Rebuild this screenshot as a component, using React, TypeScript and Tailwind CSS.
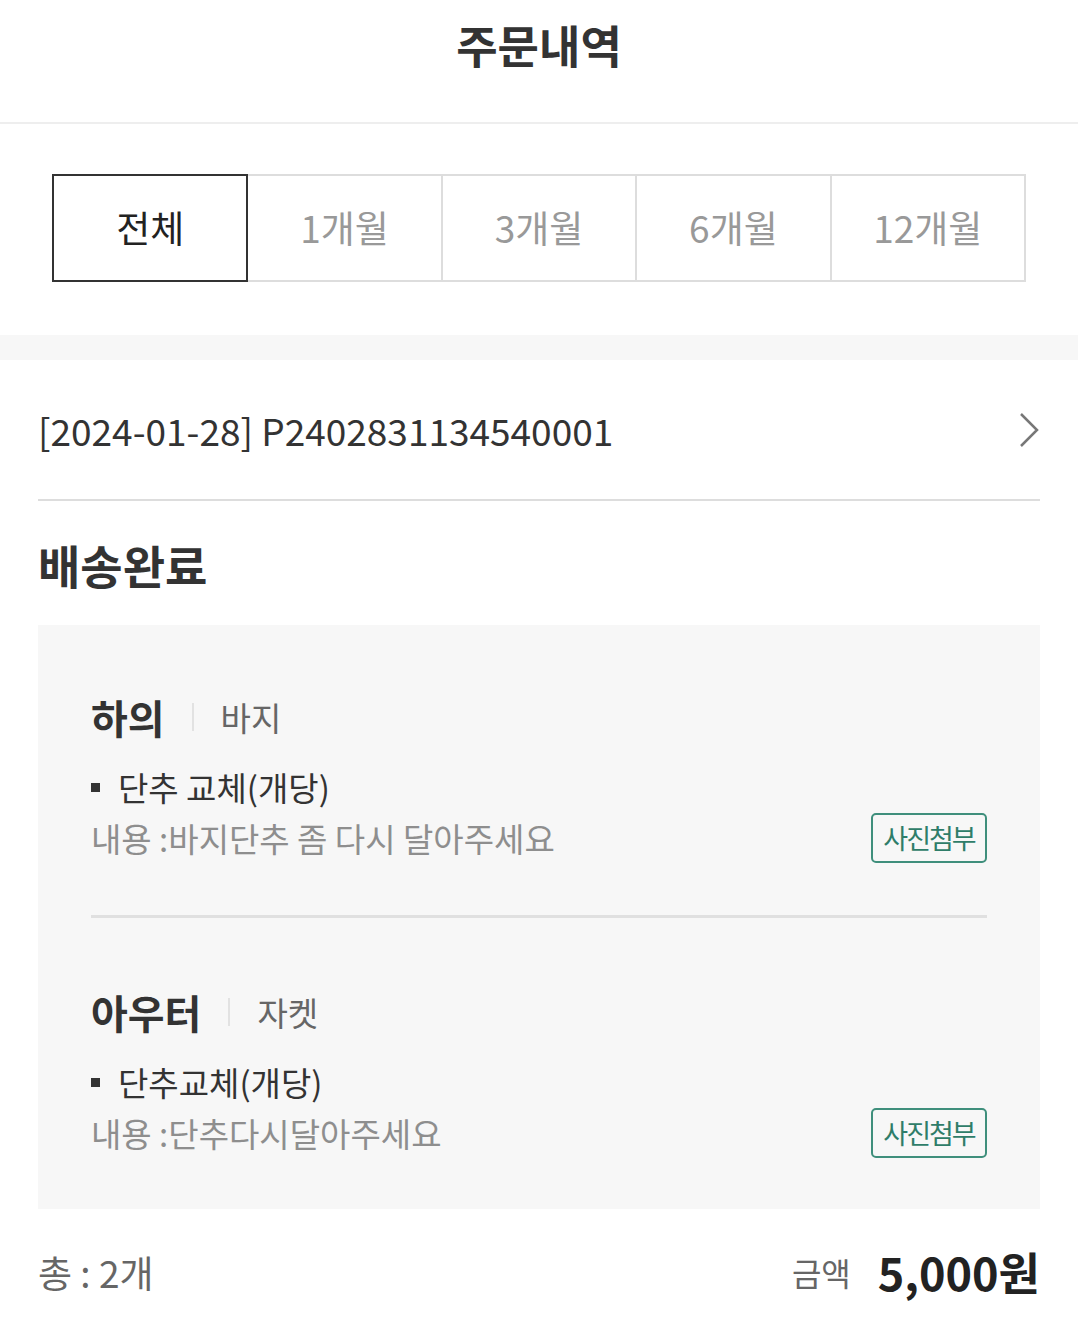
import React from "react";

const font = { fontFamily: '"Noto Sans CJK KR", "Noto Sans", sans-serif' };

function Tabs() {
  const tabs = ["전체", "1개월", "3개월", "6개월", "12개월"];
  return (
    <div className="flex px-[52px] pt-[50px] pb-[53px]">
      <div className="flex w-full">
        {tabs.map((t, i) => (
          <div
            key={t}
            className={
              i === 0
                ? "flex-1 h-[108px] flex items-center justify-center border-2 border-[#333] text-[#222] text-[37px] relative z-10"
                : "flex-1 h-[108px] flex items-center justify-center border-2 border-l-0 border-[#ddd] text-[#999] text-[37px]"
            }
          >
            {t}
          </div>
        ))}
      </div>
    </div>
  );
}

function Section({
  title,
  sub,
  item,
  content,
  top,
  bottom,
}: {
  title: string;
  sub: string;
  item: string;
  content: string;
  top: string;
  bottom: string;
}) {
  return (
    <div className={top + " " + bottom}>
      <div className="flex items-center h-[50px]">
        <span className="text-[40px] font-bold text-[#333] leading-none">{title}</span>
        <span className="w-[2px] h-[28px] bg-[#e2e2e2] mx-[27px]" />
        <span className="text-[33px] text-[#666] leading-none">{sub}</span>
      </div>
      <div className="flex items-center h-[50px] mt-[20px]">
        <span className="w-[9px] h-[9px] bg-[#333] mr-[18px]" />
        <span className="text-[33px] text-[#333] leading-none">{item}</span>
      </div>
      <div className="flex items-center justify-between h-[50px] mt-[1px]">
        <span className="text-[33px] text-[#8e8e8e] leading-none">{content}</span>
        <span className="w-[116px] h-[50px] border-2 border-[#3f8f7c] rounded-[5px] flex items-center justify-center text-[27px] text-[#2f7d69] tracking-[-2px]">
          사진첨부
        </span>
      </div>
    </div>
  );
}

export default function App() {
  return (
    <div className="w-[1078px] min-h-[1327px] bg-white" style={font}>
      <div className="h-[124px] border-b-2 border-[#eee] flex justify-center pt-[15px] box-border">
        <span className="text-[45px] font-bold text-[#333] leading-[60px]">주문내역</span>
      </div>
      <Tabs />
      <div className="h-[25px] bg-[#f7f7f7]" />
      <div className="px-[38px]">
        <div className="flex items-center justify-between pt-[40px] pb-[39px] border-b-2 border-[#ddd]">
          <span className="text-[37px] text-[#333] leading-[60px]">
            [2024-01-28] P2402831134540001
          </span>
          <svg width="22" height="36" viewBox="0 0 22 36">
            <path d="M3 2 L19 18 L3 34" fill="none" stroke="#777" strokeWidth="2.5" />
          </svg>
        </div>
        <div className="pt-[33px] pb-[31px]">
          <span className="block text-[46px] font-bold text-[#333] leading-[60px]">배송완료</span>
        </div>
        <div className="bg-[#f7f7f7] px-[53px]">
          <Section
            title="하의"
            sub="바지"
            item="단추 교체(개당)"
            content="내용 :바지단추 좀 다시 달아주세요"
            top="pt-[67px]"
            bottom="pb-[52px] border-b-[3px] border-[#e0e0e0]"
          />
          <Section
            title="아우터"
            sub="자켓"
            item="단추교체(개당)"
            content="내용 :단추다시달아주세요"
            top="pt-[69px]"
            bottom="pb-[51px]"
          />
        </div>
        <div className="flex items-center justify-between pt-[33px] pb-[25px]">
          <span className="text-[37px] text-[#666] leading-[60px]">총 : 2개</span>
          <div className="flex items-center">
            <span className="text-[32px] text-[#666] leading-[60px] mr-[27px]">금액</span>
            <span className="text-[45px] font-bold text-[#222] leading-[60px]">5,000원</span>
          </div>
        </div>
      </div>
    </div>
  );
}
